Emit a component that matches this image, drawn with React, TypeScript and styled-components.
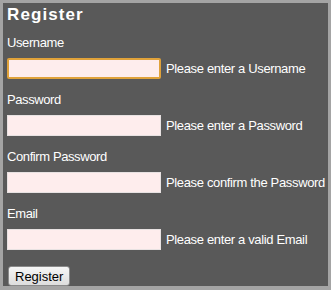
import React from "react";
import styled, { createGlobalStyle } from "styled-components";

const GlobalStyle = createGlobalStyle`
  html, body {
    margin: 0;
    padding: 0;
    background: #a4a4a4;
  }
  body {
    font-family: "Liberation Sans", Arial, sans-serif;
  }
`;

const fields = [
  { label: "Username", hint: "Please enter a Username", type: "text", focused: true },
  { label: "Password", hint: "Please enter a Password", type: "password" },
  { label: "Confirm Password", hint: "Please confirm the Password", type: "password" },
  { label: "Email", hint: "Please enter a valid Email", type: "text" },
];

export default function App() {
  return (
    <>
      <GlobalStyle />
      <Panel>
        <Title>Register</Title>
        {fields.map((f) => (
          <Field key={f.label}>
            <Label>{f.label}</Label>
            <Row>
              <Input type={f.type} $focused={f.focused} />
              <Hint>{f.hint}</Hint>
            </Row>
          </Field>
        ))}
        <Button>Register</Button>
      </Panel>
    </>
  );
}

const Panel = styled.form`
  width: 325px;
  height: 283px;
  box-sizing: border-box;
  margin: 3px 3px 4px 3px;
  padding: 2px 4px 0 4px;
  background: #595959;
  color: #ffffff;
`;

const Title = styled.h2`
  margin: 0 0 10px 0;
  font-size: 17px;
  line-height: 20px;
  font-weight: bold;
  letter-spacing: 1.1px;
`;

const Field = styled.div`
  margin-bottom: 13px;
`;

const Label = styled.div`
  font-size: 13px;
  line-height: 16px;
  letter-spacing: -0.4px;
  margin-bottom: 7px;
`;

const Row = styled.div`
  display: flex;
  align-items: center;
  gap: 5px;
`;

const Input = styled.input<{ $focused?: boolean }>`
  width: 154px;
  height: 21px;
  box-sizing: border-box;
  margin: 0;
  background: #feeded;
  border: ${(p) => (p.$focused ? "2px solid #e0a23a" : "1px solid #e8e2e2")};
  border-radius: ${(p) => (p.$focused ? "2px" : "0")};
  outline: none;
`;

const Hint = styled.span`
  font-size: 13px;
  letter-spacing: -0.35px;
  white-space: nowrap;
`;

const Button = styled.button`
  height: 20px;
  padding: 0 6px;
  margin: 3px 0 0 1px;
  font-family: "Liberation Sans", Arial, sans-serif;
  font-size: 13px;
  color: #000;
  background: linear-gradient(#f6f6f6, #dddddd);
  border: 1px solid #8a8a8a;
  border-radius: 3px;
`;
